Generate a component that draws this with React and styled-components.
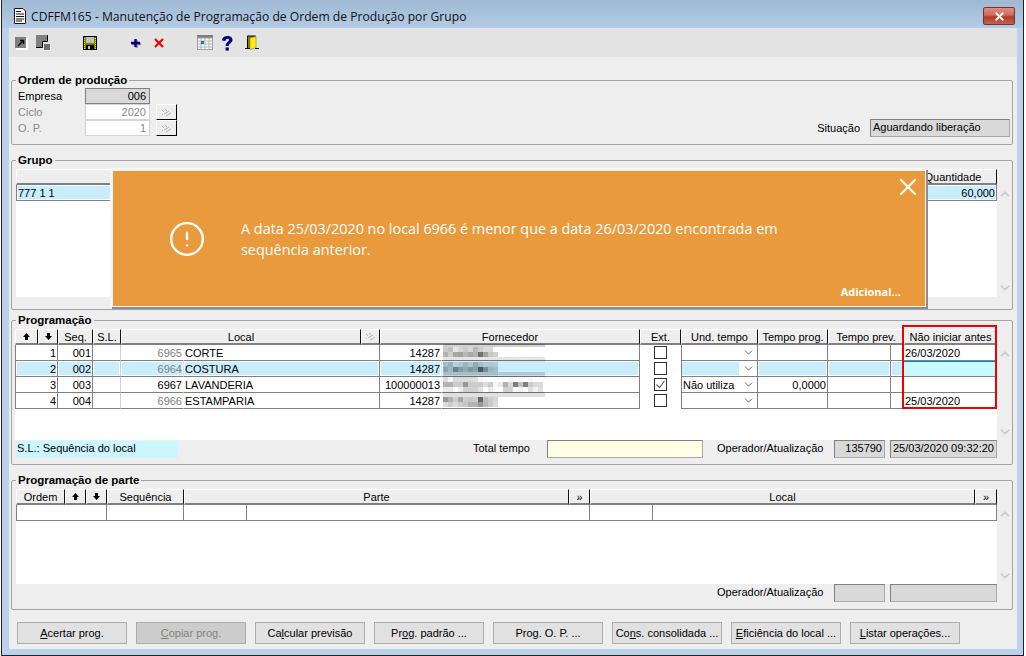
import React from 'react'
import styled, { createGlobalStyle } from 'styled-components'
import { ChevronUp, ChevronDown, CircleAlert, X } from 'lucide-react'

const GlobalStyle = createGlobalStyle`
  html, body {
    margin: 0;
    padding: 0;
    background: #fff;
  }
  * {
    box-sizing: border-box;
  }
`

const Frame = styled.div`
  position: relative;
  display: flex;
  flex-direction: column;
  width: 1023px;
  height: 656px;
  margin-left: 1px;
  border-left: 1px solid #222;
  border-right: 1px solid #222;
  border-bottom: 1px solid #222;
  background: #b9d1ea;
  font-family: 'Liberation Sans', Arial, sans-serif;
  font-size: 11px;
  color: #000;
`

const TitleBar = styled.div`
  display: flex;
  align-items: center;
  height: 28px;
  flex: none;
  padding: 4px 8px 0 11px;
  background: linear-gradient(180deg, #9fb9d4 0%, #b3cbe4 100%);
`

const TitleText = styled.span`
  margin-left: 4px;
  font-family: 'Open Sans', sans-serif;
  font-size: 12.15px;
  color: #111;
`

const CloseButton = styled.div`
  display: flex;
  align-items: center;
  justify-content: center;
  width: 32px;
  height: 18px;
  margin-left: auto;
  border: 1px solid #6e3535;
  border-radius: 2px;
  color: #fff;
  background: linear-gradient(180deg, #dc8f84 0%, #cb6a5c 45%, #b23a28 55%, #c8614f 100%);
`

const Client = styled.div`
  flex: 1;
  display: flex;
  flex-direction: column;
  margin: 0 6px 6px 7px;
  background: #eeeeee;
`

const Toolbar = styled.div`
  display: flex;
  align-items: center;
  height: 29px;
  flex: none;
  padding-left: 4px;
  background: #e3e3e3;
`

const ToolIcon = styled.svg`
  display: block;
  width: 16px;
  height: 16px;
  margin-left: ${props => props.$gap || 0}px;
`

const Panel = styled.fieldset`
  margin: ${props => props.$top}px 0 0 2px;
  padding: 0;
  width: 1002px;
  min-width: 0;
  border: 1px solid #a3a3a3;
  border-radius: 2px;
`

const Legend = styled.legend`
  margin-left: 4px;
  padding: 0 2px;
  height: 14px;
  line-height: 14px;
  font-size: 11.5px;
  font-weight: bold;
`

const OrderBody = styled.div`
  display: flex;
  align-items: flex-end;
  justify-content: space-between;
  padding: 1px 2px 7px 6px;
`

const FormRows = styled.div`
  display: flex;
  flex-direction: column;
  margin-bottom: 1px;
`

const FormRow = styled.div`
  display: flex;
  align-items: center;
  height: 16px;
  color: ${props => (props.$disabled ? '#8a8a8a' : '#000')};
`

const FormLabel = styled.span`
  width: 67px;
`

const FormField = styled.div`
  width: 65px;
  height: 16px;
  line-height: 15px;
  padding-right: 3px;
  text-align: right;
  color: ${props => (props.$readonly ? '#000' : '#8a8a8a')};
  background: ${props => (props.$readonly ? '#d9d9d9' : '#fff')};
  border: 1px solid ${props => (props.$readonly ? '#808080' : '#d4d4d4')};
`

const LookupButton = styled.div`
  display: flex;
  align-items: center;
  justify-content: center;
  width: 21px;
  height: 16px;
  margin-left: 6px;
  background: #eeeeee;
  border-top: 1px solid #fff;
  border-left: 1px solid #fff;
  border-right: 1px solid #000;
  border-bottom: 1px solid #000;
`

const Situation = styled.div`
  display: flex;
  align-items: center;
  gap: 10px;
`

const SunkenField = styled.div`
  flex: none;
  width: ${props => props.$width}px;
  height: 18px;
  line-height: 15px;
  padding: 0 2px;
  margin-left: ${props => props.$gap || 0}px;
  text-align: ${props => props.$align || 'left'};
  white-space: nowrap;
  background: ${props => props.$bg || '#d9d9d9'};
  border: 1px solid #808080;
  border-right-color: #a8a8a8;
  border-bottom-color: #a8a8a8;
`

const GridArea = styled.div`
  display: flex;
  margin: 2px 0 0 ${props => props.$left || 0}px;
`

const TableWrap = styled.div`
  position: relative;
  width: ${props => props.$width}px;
  flex: none;
`

const HeaderRow = styled.div`
  display: grid;
  grid-template-columns: ${props => props.$cols};
  height: 16px;
`

const HeadCell = styled.div`
  display: flex;
  align-items: center;
  justify-content: center;
  min-width: 0;
  white-space: nowrap;
  overflow: hidden;
  background: #eeeeee;
  border-top: 1px solid #fff;
  border-left: 1px solid #fff;
  border-right: 1px solid ${props => (props.$plain ? '#eeeeee' : '#111')};
  border-bottom: 2px solid #808080;
`

const TableBody = styled.div`
  height: ${props => props.$height}px;
  background: #fff;
`

const DataRow = styled.div`
  display: grid;
  grid-template-columns: ${props => props.$cols};
  height: 16px;
`

const Cell = styled.div`
  height: 16px;
  line-height: 17px;
  padding: 0 1px;
  min-width: 0;
  white-space: nowrap;
  overflow: hidden;
  text-align: ${props => props.$align || 'left'};
  color: ${props => (props.$muted ? '#808080' : '#000')};
  background: ${props => (props.$active ? '#c8edfc' : '#fff')};
  box-shadow: ${props => (props.$active ? 'inset 0 0 0 1px #fff' : 'none')};
  border-bottom: 1px solid #808080;
  border-left: ${props => (props.$first ? '1px solid #808080' : '0')};
  border-right: 1px solid ${props => (props.$soft ? '#cfcfcf' : props.$open ? 'transparent' : '#808080')};
`

const DateCell = styled(Cell)`
  background: ${props => (props.$active ? '#c8fbff' : '#fff')};
  border-top: ${props => (props.$active ? '1px solid #1580d0' : '0')};
  box-shadow: none;
  border-right: 0;
`

const CheckCell = styled.div`
  display: flex;
  align-items: center;
  justify-content: center;
  height: 16px;
  padding-bottom: 1px;
`

const CheckBox = styled.div`
  display: flex;
  align-items: center;
  justify-content: center;
  width: 13px;
  height: 13px;
  background: #fff;
  border: 1px solid #333;
`

const ComboCell = styled.div`
  display: flex;
  height: 16px;
  line-height: 14px;
  background: #fff;
  border-left: 1px solid #808080;
  border-right: 1px solid #808080;
  border-bottom: 1px solid #808080;
`

const ComboText = styled.div`
  flex: 1;
  padding-left: 1px;
  margin: 1px 0;
  background: ${props => (props.$active ? '#c8edfc' : 'transparent')};
`

const ComboArrow = styled.div`
  display: flex;
  align-items: center;
  justify-content: center;
  width: 18px;
  padding-left: 1px;
  color: #555;
`

const RedMark = styled.div`
  position: absolute;
  left: 887px;
  top: -4px;
  width: 95px;
  height: 84px;
  border: 2px solid #f00000;
  pointer-events: none;
`

const Mosaic = styled.svg`
  position: absolute;
  left: 428px;
  top: 15px;
  width: 102px;
  height: 63px;
`

const ScrollTrack = styled.div`
  display: flex;
  flex-direction: column;
  align-items: center;
  justify-content: space-between;
  width: 15px;
  padding: 18px 0 ${props => props.$bottom}px;
  color: #c8c8c8;
`

const StatusRow = styled.div`
  display: flex;
  align-items: flex-start;
  height: ${props => props.$height}px;
  padding-left: ${props => props.$left || 0}px;
`

const LegendNote = styled.div`
  flex: none;
  width: 162px;
  height: 17px;
  margin-top: 1px;
  line-height: 14px;
  padding-left: 1px;
  background: #ccf6ff;
`

const StatusLabel = styled.span`
  flex: none;
  width: ${props => props.$width}px;
  margin-left: ${props => props.$gap || 0}px;
  padding-top: 1px;
  line-height: 14px;
  white-space: nowrap;
`

const PanelBottom = styled.div`
  padding-bottom: ${props => props.$pad}px;
`

const ButtonBar = styled.div`
  display: flex;
  gap: 9px;
  margin-top: 12px;
  padding-left: 8px;
`

const ActionButton = styled.div`
  width: 110px;
  height: 22px;
  line-height: 20px;
  text-align: center;
  white-space: nowrap;
  color: ${props => (props.$disabled ? '#838383' : '#000')};
  background: ${props => (props.$disabled ? '#cccccc' : '#e1e1e1')};
  border: 1px solid #adadad;
  u {
    text-underline-offset: 1px;
  }
`

const Alert = styled.div`
  position: absolute;
  left: 108px;
  top: 168px;
  display: flex;
  flex-direction: column;
  width: 816px;
  height: 139px;
  color: #fff;
  background: #e99a3c;
  border: 3px solid #f6f6f6;
  border-right-width: 1px;
  border-bottom-width: 1px;
  box-shadow: 2px 2px 0 #8c8c8c;
  font-family: 'Open Sans', sans-serif;
`

const AlertTop = styled.div`
  display: flex;
  justify-content: flex-end;
  height: 47px;
  padding: 2px 3px 0 0;
`

const AlertBody = styled.div`
  display: flex;
  align-items: center;
  gap: 35px;
  padding-left: 55px;
`

const AlertText = styled.div`
  width: 560px;
  font-size: 14.4px;
  line-height: 21px;
`

const AlertMore = styled.div`
  margin: auto 24px 7px auto;
  font-size: 11px;
  font-weight: bold;
`

const PROGRAM_HEAD = '23px 20px 35px 28px 240px 19px 260px 41px 77px 70px 76px 93px'
const PROGRAM_COLS = '43px 35px 28px 63px 196px 62px 198px 41px 77px 70px 63px 13px 93px'
const PART_HEAD = '49px 21px 21px 77px 385px 21px 385px 22px'
const PART_COLS = '91px 77px 63px 343px 63px 344px'

const programRows = [
  { n: 1, seq: '001', code: '6965', name: 'CORTE', muted: true, forn: '14287', und: '', prog: '', date: '26/03/2020' },
  { n: 2, seq: '002', code: '6964', name: 'COSTURA', muted: true, forn: '14287', und: '', prog: '', date: '', active: true },
  { n: 3, seq: '003', code: '6967', name: 'LAVANDERIA', forn: '100000013', und: 'Não utiliza', prog: '0,0000', date: '', checked: true },
  { n: 4, seq: '004', code: '6966', name: 'ESTAMPARIA', muted: true, forn: '14287', und: '', prog: '', date: '25/03/2020' },
]

// blurred supplier names, darkness of each 5px block
const mosaicLines = [
  { y: 0, h: 3, cells: Array(21).fill(0.18) },
  { y: 3, h: 5, cells: [0.2, 0.25, 0.1, 0.16, 0.2, 0.16, 0.28, 0.2, 0.14, 0.14] },
  { y: 8, h: 5, cells: [0.3, 0.2, 0.34, 0.36, 0.28, 0.34, 0.3, 0.56, 0.36, 0.22, 0.18] },
  { y: 13, h: 5, cells: Array(21).fill(0.1) },
  { y: 18, h: 5, cells: [0.2, 0.25, 0.12, 0.16, 0.24, 0.16, 0.28, 0.2, 0.14, 0.16, 0.14] },
  { y: 23, h: 5, cells: [0.3, 0.22, 0.46, 0.34, 0.28, 0.36, 0.3, 0.62, 0.4, 0.24, 0.2] },
  { y: 28, h: 5, cells: Array(21).fill(0.14).map((v, i) => (i < 11 ? v + 0.05 : v)) },
  { y: 33, h: 5, cells: [0.14, 0.04, 0.14, 0.14, 0.14, 0.14, 0.12, 0.04, 0.02, 0, 0, 0, 0, 0.04, 0, 0, 0, 0.03, 0, 0] },
  { y: 38, h: 5, cells: [0.3, 0.3, 0.2, 0.2, 0.4, 0.2, 0.2, 0.2, 0.14, 0.2, 0.04, 0.08, 0.3, 0.14, 0.5, 0.24, 0.5, 0.2, 0.14, 0.14] },
  { y: 43, h: 5, cells: [0.08, 0.08, 0, 0.08, 0.18, 0.18, 0.18, 0.12, 0, 0.08, 0, 0, 0.18, 0.18, 0, 0.05, 0, 0.12, 0.05, 0.12] },
  { y: 48, h: 5, cells: Array(21).fill(0.12) },
  { y: 53, h: 5, cells: [0.4, 0.3, 0.2, 0.34, 0.2, 0.22, 0.2, 0.6, 0.26, 0.2, 0.16] },
  { y: 58, h: 5, cells: [0.14, 0.2, 0.14, 0.2, 0.22, 0.3, 0.3, 0.4, 0.28, 0.2, 0.14] },
]

const buttons = [
  { pre: '', key: 'A', post: 'certar prog.' },
  { pre: '', key: 'C', post: 'opiar prog.', disabled: true },
  { pre: 'Ca', key: 'l', post: 'cular previsão' },
  { pre: 'Pr', key: 'o', post: 'g. padrão ...' },
  { pre: 'Prog. O. P. ...', key: '', post: '' },
  { pre: 'Co', key: 'n', post: 's. consolidada ...' },
  { pre: '', key: 'E', post: 'ficiência do local ...' },
  { pre: '', key: 'L', post: 'istar operações...' },
]

const ArrowUp = () => (
  <svg width="9" height="9" viewBox="0 0 9 9">
    <path d="M4.5 1 L8 5 H6 V8 H3 V5 H1 Z" fill="#000" />
  </svg>
)

const ArrowDown = () => (
  <svg width="9" height="9" viewBox="0 0 9 9">
    <path d="M4.5 8 L8 4 H6 V1 H3 V4 H1 Z" fill="#000" />
  </svg>
)

const Hatch = () => (
  <svg width="11" height="9" viewBox="0 0 11 9">
    <path d="M1 2 L3 4 M4 1 L6 3 M3 6 L8 3 M5 8 L10 5 M1 7 L2 6" stroke="#b4b4b4" strokeWidth="1" fill="none" />
  </svg>
)

const Check = () => (
  <svg width="11" height="11" viewBox="0 0 11 11">
    <path d="M1.5 5.5 L4.5 8.5 L9.5 2" stroke="#666" strokeWidth="1.2" fill="none" />
  </svg>
)

const DocIcon = () => (
  <svg width="14" height="16" viewBox="0 0 14 16">
    <path d="M1.5 .5 H10 L12.5 3 V15.5 H1.5 Z" fill="#fff" stroke="#111" />
    <path d="M3 3.5 H8 M3 6 H11 M3 8.5 H11 M3 11 H11 M3 13 H9" stroke="#111" />
  </svg>
)

const Scroll = ({ bottom }) => (
  <ScrollTrack $bottom={bottom}>
    <ChevronUp size={14} strokeWidth={3} />
    <ChevronDown size={14} strokeWidth={3} />
  </ScrollTrack>
)

const ToolbarIcons = () => (
  <Toolbar>
    <ToolIcon viewBox="0 0 16 16">
      <rect x="3" y="3" width="12" height="12" fill="#fff" />
      <rect x="2" y="2" width="11" height="11" fill="#808080" />
      <path d="M5 11 L10 6 M7 5.5 H10.5 V9" stroke="#000" strokeWidth="1.4" fill="none" />
    </ToolIcon>
    <ToolIcon $gap={6} viewBox="0 0 16 16">
      <path d="M1 0 H12 V6 H7 V12 H1 Z" fill="#808080" />
      <path d="M12.5 0 V6.5 H7.5 V12.5 H1" stroke="#000" fill="none" />
      <rect x="9" y="9" width="6" height="6" fill="#6e6e6e" />
      <path d="M15.5 9 V15.5 H9" stroke="#fff" fill="none" />
    </ToolIcon>
    <ToolIcon $gap={31} viewBox="0 0 16 16">
      <rect x="1.5" y="1.5" width="13" height="13" fill="#808000" stroke="#000" />
      <rect x="4" y="2" width="8" height="6" fill="#c0c0c0" />
      <rect x="4" y="10" width="8" height="4" fill="#000" />
      <rect x="6" y="11" width="2" height="3" fill="#c0c0c0" />
      <path d="M2.5 3 V14 M13.5 3 V14" stroke="#e8e800" strokeDasharray="1 1" />
    </ToolIcon>
    <ToolIcon $gap={30} viewBox="0 0 16 16">
      <path d="M4 9 H13 M8.5 5 V13" stroke="#8c8c8c" strokeWidth="2.4" />
      <path d="M3 8 H12 M7.5 4 V12" stroke="#000080" strokeWidth="2.4" />
    </ToolIcon>
    <ToolIcon $gap={7} viewBox="0 0 16 16">
      <path d="M4 4 L12 12 M12 4 L4 12" stroke="#f00000" strokeWidth="2.2" />
    </ToolIcon>
    <ToolIcon $gap={30} viewBox="0 0 16 16">
      <rect x="0" y="0" width="16" height="3" fill="#808080" />
      <rect x=".5" y="3" width="15" height="11.5" fill="#fff" stroke="#a0a0a0" />
      <path d="M4 3 V14 M8 3 V14 M12 3 V14 M1 6 H15 M1 9 H15 M1 12 H15" stroke="#b4b4b4" />
      <rect x="4" y="6" width="3" height="3" fill="#1a7f9c" />
    </ToolIcon>
    <ToolIcon $gap={6} viewBox="0 0 16 16">
      <path
        d="M3 5.5 C3 0 13.5 -.5 13.5 5 C13.5 8.3 9.8 8.2 9.8 11 H6.6 C6.6 7 10 7.2 10 5 C10 3.2 6.5 3.2 6.5 6 Z"
        fill="#000080"
      />
      <rect x="6.6" y="12.4" width="3.2" height="3.2" fill="#000080" />
    </ToolIcon>
    <ToolIcon $gap={9} viewBox="0 0 16 16">
      <path d="M3.5 13.5 V1 H11.5 V13.5" fill="#808000" stroke="#000" />
      <path d="M6 3 L12 1.5 V13 L6 14.5 Z" fill="#ffe81a" stroke="#8c8c00" strokeWidth=".6" />
      <path d="M1 13.5 H6 M11 13.5 H15" stroke="#000" />
    </ToolIcon>
  </Toolbar>
)

const App = () => (
  <>
    <GlobalStyle />
    <Frame>
      <TitleBar>
        <DocIcon />
        <TitleText>CDFFM165 - Manutenção de Programação de Ordem de Produção por Grupo</TitleText>
        <CloseButton>
          <X size={13} strokeWidth={3.5} />
        </CloseButton>
      </TitleBar>

      <Client>
        <ToolbarIcons />

        <Panel $top={16}>
          <Legend>Ordem de produção</Legend>
          <OrderBody>
            <FormRows>
              <FormRow>
                <FormLabel>Empresa</FormLabel>
                <FormField $readonly>006</FormField>
              </FormRow>
              <FormRow $disabled>
                <FormLabel>Ciclo</FormLabel>
                <FormField>2020</FormField>
                <LookupButton>
                  <Hatch />
                </LookupButton>
              </FormRow>
              <FormRow $disabled>
                <FormLabel>O. P.</FormLabel>
                <FormField>1</FormField>
                <LookupButton>
                  <Hatch />
                </LookupButton>
              </FormRow>
            </FormRows>
            <Situation>
              <span>Situação</span>
              <SunkenField $width={140}>Aguardando liberação</SunkenField>
            </Situation>
          </OrderBody>
        </Panel>

        <Panel $top={8}>
          <Legend>Grupo</Legend>
          <GridArea $left={4}>
            <TableWrap $width={981}>
              <HeaderRow $cols="893px 88px">
                <HeadCell $plain />
                <HeadCell>Quantidade</HeadCell>
              </HeaderRow>
              <TableBody $height={112}>
                <DataRow $cols="893px 88px">
                  <Cell $first $active $open>
                    777 1 1
                  </Cell>
                  <Cell $active $align="right">
                    60,000
                  </Cell>
                </DataRow>
              </TableBody>
            </TableWrap>
            <Scroll bottom={2} />
          </GridArea>
          <PanelBottom $pad={12} />
        </Panel>

        <Panel $top={3}>
          <Legend>Programação</Legend>
          <GridArea $left={3}>
            <TableWrap $width={982}>
              <HeaderRow $cols={PROGRAM_HEAD}>
                <HeadCell>
                  <ArrowUp />
                </HeadCell>
                <HeadCell>
                  <ArrowDown />
                </HeadCell>
                <HeadCell>Seq.</HeadCell>
                <HeadCell>S.L.</HeadCell>
                <HeadCell>Local</HeadCell>
                <HeadCell>
                  <Hatch />
                </HeadCell>
                <HeadCell>Fornecedor</HeadCell>
                <HeadCell>Ext.</HeadCell>
                <HeadCell>Und. tempo</HeadCell>
                <HeadCell>Tempo prog.</HeadCell>
                <HeadCell>Tempo prev.</HeadCell>
                <HeadCell $plain>Não iniciar antes</HeadCell>
              </HeaderRow>
              <TableBody $height={95}>
                {programRows.map(row => (
                  <DataRow key={row.n} $cols={PROGRAM_COLS}>
                    <Cell $first $active={row.active} $align="right">
                      {row.n}
                    </Cell>
                    <Cell $active={row.active} $align="right">
                      {row.seq}
                    </Cell>
                    <Cell $active={row.active} $soft />
                    <Cell $active={row.active} $open $align="right" $muted={row.muted}>
                      {row.code}
                    </Cell>
                    <Cell $active={row.active}>{row.name}</Cell>
                    <Cell $active={row.active} $open $align="right">
                      {row.forn}
                    </Cell>
                    <Cell $active={row.active} />
                    <CheckCell>
                      <CheckBox>{row.checked && <Check />}</CheckBox>
                    </CheckCell>
                    <ComboCell>
                      <ComboText $active={row.active}>{row.und}</ComboText>
                      <ComboArrow>
                        <ChevronDown size={13} strokeWidth={1.6} />
                      </ComboArrow>
                    </ComboCell>
                    <Cell $active={row.active} $align="right">
                      {row.prog}
                    </Cell>
                    <Cell $active={row.active} />
                    <Cell $active={row.active} />
                    <DateCell $active={row.active}>{row.date}</DateCell>
                  </DataRow>
                ))}
              </TableBody>
              <Mosaic viewBox="0 0 102 63">
                {mosaicLines.map(line =>
                  line.cells.map((dark, i) => (
                    <rect key={`${line.y}-${i}`} x={i * 5} y={line.y} width="5" height={line.h} fill="#000" opacity={dark} />
                  )),
                )}
              </Mosaic>
              <RedMark />
            </TableWrap>
            <Scroll bottom={1} />
          </GridArea>
          <PanelBottom $pad={5}>
            <StatusRow $height={19} $left={4}>
              <LegendNote>S.L.: Sequência do local</LegendNote>
              <StatusLabel $gap={295} $width={74}>
                Total tempo
              </StatusLabel>
              <SunkenField $width={156} $bg="#ffffe6" />
              <StatusLabel $gap={14} $width={117}>
                Operador/Atualização
              </StatusLabel>
              <SunkenField $width={51} $align="right">
                135790
              </SunkenField>
              <SunkenField $width={107} $gap={5}>
                25/03/2020 09:32:20
              </SunkenField>
            </StatusRow>
          </PanelBottom>
        </Panel>

        <Panel $top={8}>
          <Legend>Programação de parte</Legend>
          <GridArea $left={4}>
            <TableWrap $width={981}>
              <HeaderRow $cols={PART_HEAD}>
                <HeadCell>Ordem</HeadCell>
                <HeadCell>
                  <ArrowUp />
                </HeadCell>
                <HeadCell>
                  <ArrowDown />
                </HeadCell>
                <HeadCell>Sequência</HeadCell>
                <HeadCell>Parte</HeadCell>
                <HeadCell>»</HeadCell>
                <HeadCell>Local</HeadCell>
                <HeadCell>»</HeadCell>
              </HeaderRow>
              <TableBody $height={79}>
                <DataRow $cols={PART_COLS}>
                  <Cell $first />
                  <Cell />
                  <Cell />
                  <Cell />
                  <Cell />
                  <Cell />
                </DataRow>
              </TableBody>
            </TableWrap>
            <Scroll bottom={1} />
          </GridArea>
          <PanelBottom $pad={7}>
            <StatusRow $height={18} $left={705}>
              <StatusLabel $width={117}>Operador/Atualização</StatusLabel>
              <SunkenField $width={51} />
              <SunkenField $width={107} $gap={5} />
            </StatusRow>
          </PanelBottom>
        </Panel>

        <ButtonBar>
          {buttons.map(b => (
            <ActionButton key={b.pre + b.key + b.post} $disabled={b.disabled}>
              {b.pre}
              {b.key && <u>{b.key}</u>}
              {b.post}
            </ActionButton>
          ))}
        </ButtonBar>
      </Client>

      <Alert>
        <AlertTop>
          <X size={28} strokeWidth={1.8} />
        </AlertTop>
        <AlertBody>
          <CircleAlert size={38} strokeWidth={1.5} />
          <AlertText>
            A data 25/03/2020 no local 6966 é menor que a data 26/03/2020 encontrada em sequência anterior.
          </AlertText>
        </AlertBody>
        <AlertMore>Adicional...</AlertMore>
      </Alert>
    </Frame>
  </>
)

export default App
